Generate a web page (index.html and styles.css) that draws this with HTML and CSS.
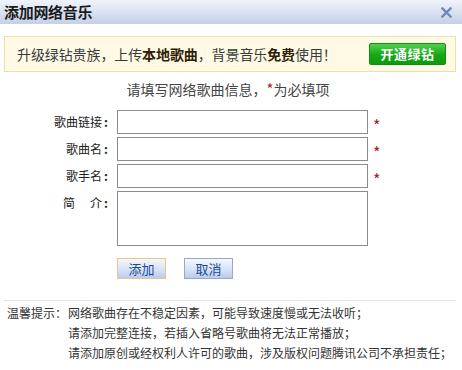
FILE: index.html
```html
<!DOCTYPE html>
<html lang="zh-CN">
<head>
<meta charset="utf-8">
<title>添加网络音乐</title>
<link rel="stylesheet" href="styles.css">
</head>
<body>
<div class="dialog">
  <div class="titlebar">
    <span class="title">添加网络音乐</span>
    <svg class="close" width="11" height="11" viewBox="0 0 11 11"><path d="M1.5 1.5 L9.5 9.5 M9.5 1.5 L1.5 9.5" stroke="#6d88bd" stroke-width="2.4" stroke-linecap="square"/></svg>
  </div>
  <div class="banner">
    <span class="banner-text">升级绿钻贵族，上传<b>本地歌曲</b>，背景音乐<b>免费</b>使用！</span>
    <span class="green-btn">开通绿钻</span>
  </div>
  <div class="subtitle">请填写网络歌曲信息，<span class="req">*</span>为必填项</div>
  <div class="form">
    <div class="row">
      <span class="label">歌曲链接<i>:</i></span>
      <span class="input"></span>
      <span class="star">*</span>
    </div>
    <div class="row">
      <span class="label">歌曲名<i>:</i></span>
      <span class="input"></span>
      <span class="star">*</span>
    </div>
    <div class="row">
      <span class="label">歌手名<i>:</i></span>
      <span class="input"></span>
      <span class="star">*</span>
    </div>
    <div class="row row-top">
      <span class="label">简<span class="sp"></span>介<i>:</i></span>
      <span class="input textarea"></span>
    </div>
    <div class="buttons">
      <span class="btn btn-focus">添加</span>
      <span class="btn">取消</span>
    </div>
  </div>
  <div class="tips">
    <span class="tips-label">温馨提示：</span>
    <div class="tips-lines">
      <div>网络歌曲存在不稳定因素，可能导致速度慢或无法收听；</div>
      <div>请添加完整连接，若插入省略号歌曲将无法正常播放；</div>
      <div>请添加原创或经权利人许可的歌曲，涉及版权问题腾讯公司不承担责任；</div>
    </div>
  </div>
</div>
</body>
</html>
```
FILE: styles.css
```css
* { box-sizing: border-box; }
html, body { margin: 0; padding: 0; background: #fff; }
body {
  font-family: "Noto Sans CJK SC", "Noto Sans", sans-serif;
  color: #333;
  width: 462px;
  height: 370px;
  overflow: hidden;
}
.titlebar {
  height: 24px;
  background: linear-gradient(#f0f3fb, #c4d0e9);
  display: flex;
  align-items: center;
  justify-content: space-between;
  padding: 0 10px 0 4px;
}
.title {
  font-size: 15px;
  font-weight: 700;
  color: #1b1b1b;
  line-height: 24px;
  letter-spacing: -0.3px;
}
.close { display: block; margin-top: 1px; }
.banner {
  margin: 12px 6px 0 4px;
  height: 36px;
  background: #fffae6;
  border: 1px solid #f0deaa;
  display: flex;
  align-items: center;
  justify-content: space-between;
  padding: 0 9px 0 12px;
}
.banner-text {
  font-size: 14px;
  color: #3a3a3a;
  line-height: 20px;
  letter-spacing: -0.1px;
}
.banner-text b { color: #2e1e05; font-weight: 700; }
.green-btn {
  width: 77px;
  height: 22px;
  border: 1px solid #109010;
  border-radius: 2px;
  background: linear-gradient(#4fd24f, #16a716 55%, #0e9a0e);
  color: #fff;
  font-size: 13px;
  font-weight: 700;
  line-height: 20px;
  text-align: center;
  letter-spacing: 0.5px;
}
.subtitle {
  margin: 8px 0 0 2px;
  width: 452px;
  text-align: center;
  font-size: 14px;
  line-height: 18px;
  color: #444;
}
.req { color: #c01a1a; font-size: 15px; }
.form {
  margin-top: 12px;
  display: flex;
  flex-direction: column;
  gap: 3px;
}
.row {
  display: flex;
  align-items: center;
}
.row-top { align-items: flex-start; }
.label {
  width: 112px;
  padding-right: 2px;
  text-align: right;
  font-size: 12px;
  line-height: 24px;
  color: #222;
}
.label i {
  font-style: normal;
  font-weight: 700;
  display: inline-block;
  width: 8px;
  text-align: center;
}
.sp { display: inline-block; width: 15px; }
.input {
  margin-left: 5px;
  width: 251px;
  height: 24px;
  border: 1px solid #8c8c8c;
  background: #fff;
}
.textarea { height: 55px; }
.star {
  margin-left: 5px;
  color: #a5202a;
  font-size: 16px;
  line-height: 16px;
  padding-top: 6px;
}
.buttons {
  margin: 9px 0 0 117px;
  display: flex;
  gap: 18px;
}
.btn {
  width: 49px;
  height: 21px;
  border: 1px solid #9aa8c2;
  background: linear-gradient(#f4f7fd, #dbe5f7 50%, #b9cbee);
  color: #1d4c96;
  font-size: 13px;
  line-height: 19px;
  text-align: center;
}
.btn-focus { border-color: #ecc783; }
.tips {
  margin: 21px 6px 0 4px;
  border-top: 1px solid #e2e2e2;
  padding: 2px 0 0 3px;
  display: flex;
  font-size: 12px;
  line-height: 20px;
  color: #333;
}
.tips-label { width: 61px; flex: none; }
.tips-lines { display: flex; flex-direction: column; }
```
